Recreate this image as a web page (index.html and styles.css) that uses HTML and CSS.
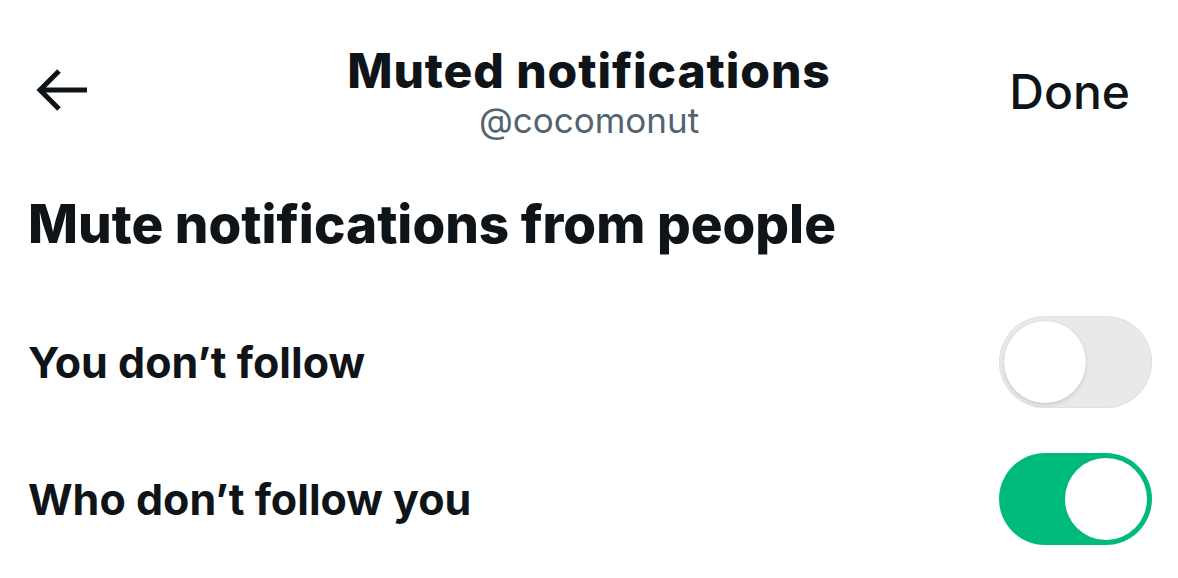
FILE: index.html
```html
<!DOCTYPE html>
<html>
<head>
<meta charset="utf-8">
<link rel="stylesheet" href="styles.css">
</head>
<body>
<div class="page">
  <header class="topbar">
    <div class="back">
      <svg width="54" height="44" viewBox="0 0 54 44"><path d="M52 22H6M24 3L5 22l19 19" fill="none" stroke="#0f1419" stroke-width="5"/></svg>
    </div>
    <div class="titles">
      <div class="title">Muted notifications</div>
      <div class="handle">@cocomonut</div>
    </div>
    <div class="done">Done</div>
  </header>
  <h2 class="section">Mute notifications from people</h2>
  <div class="rows">
    <div class="row">
      <span class="label">You don’t follow</span>
      <span class="toggle"><span class="knob"></span></span>
    </div>
    <div class="row">
      <span class="label">Who don’t follow you</span>
      <span class="toggle on"><span class="knob"></span></span>
    </div>
  </div>
</div>
</body>
</html>
```
FILE: styles.css
```css
html, body { margin: 0; padding: 0; background: #fff; }
body { font-family: Inter, "Noto Sans", sans-serif; color: #0f1419; }
.page { width: 1178px; height: 578px; overflow: hidden; }
.topbar { display: grid; grid-template-columns: 1fr auto 1fr; align-items: center; padding: 36px 48px 0 48px; height: 110px; box-sizing: content-box; }
.back { display: flex; align-items: center; margin: -2px 0 0 -13px; }
.back svg { display: block; }
.titles { display: flex; flex-direction: column; align-items: center; }
.title { font-size: 48px; font-weight: 800; line-height: 60px; letter-spacing: 0.9px; }
.handle { font-size: 35px; color: #536471; line-height: 42px; margin-top: -2px; }
.done { justify-self: end; font-size: 48px; font-weight: 500; line-height: 56px; margin-top: 2px; }
.section { margin: 46px 0 0 28px; font-size: 53px; font-weight: 800; line-height: 64px; letter-spacing: 0; }
.rows { margin-top: 37px; }
.row { display: flex; align-items: center; justify-content: space-between; padding: 0 26px 0 28px; height: 137px; }
.label { font-size: 43px; font-weight: 700; letter-spacing: 0; }
.toggle { width: 153px; height: 92px; border-radius: 46px; background: #e9e9eb; position: relative; display: block; box-shadow: inset 0 0 0 1px #e2e2e4; }
.toggle .knob { position: absolute; left: 5px; top: 5px; width: 82px; height: 82px; border-radius: 50%; background: #fff; box-shadow: 0 2px 4px rgba(0,0,0,0.12), 0 0 1px rgba(0,0,0,0.1); }
.toggle.on { background: #00ba7c; box-shadow: none; }
.toggle.on .knob { left: 66px; box-shadow: none; }
```
